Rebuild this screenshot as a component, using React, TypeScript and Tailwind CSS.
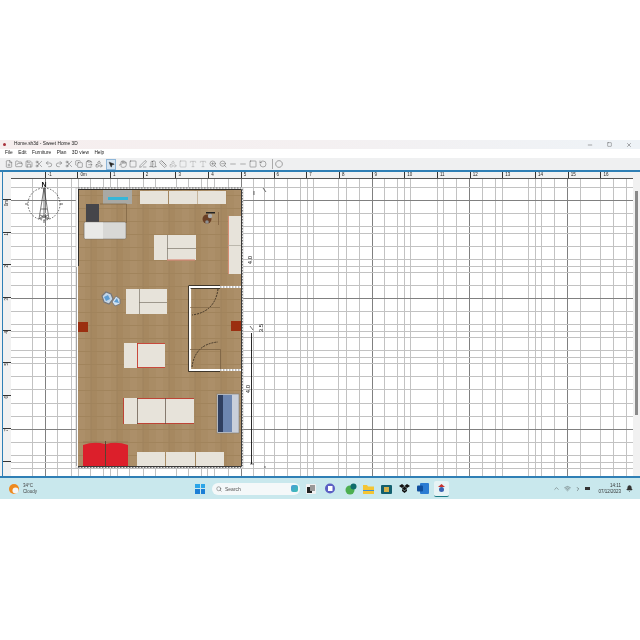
import {
  Bell, ChevronRight, ChevronUp, Circle, ClipboardPaste, Copy, DoorOpen, FilePlus, FolderOpen, Hand, Minus, MousePointer2,
  PenLine, Redo2, RotateCcw, Ruler, Save, Scissors, Search, Shapes, Square, Type, Undo2, Wifi, X, ZoomIn, ZoomOut,
} from "lucide-react"

const verticals = [10, 32, 45, 57, 71, 78, 90, 103, 110, 117, 129, 143, 155, 176, 188, 201, 207, 214, 228, 241, 253, 264, 274, 287, 300, 307, 313, 338, 346, 359, 372, 384, 397, 404, 410, 437, 443, 456, 469, 482, 495, 502, 528, 535, 541, 554, 567, 580, 600, 613, 626]
const darkV = [45, 241, 372, 469, 567]
const horizontals = [186, 199, 212, 225, 232, 245, 258, 265, 271, 284, 297, 310, 323, 330, 336, 349, 356, 362, 375, 388, 402, 415, 428, 441, 454, 461, 467]
const darkH = [199, 297, 428]

const rulerTop = ["", "-1", "0m", "1", "2", "3", "4", "5", "6", "7", "8", "9", "10", "11", "12", "13", "14", "15", "16"]
const rulerLeft = ["0m", "1", "2", "3", "4", "5", "6", "7"]
const toolsA = [FilePlus, FolderOpen, Save, Scissors, Undo2, Redo2, Scissors, Copy, ClipboardPaste, Shapes]
const toolsB = [Hand, Square, PenLine, DoorOpen, Ruler, Shapes, Square, Type, Type, ZoomIn, ZoomOut, Minus, Minus, Square, RotateCcw]

function Cabinet({ x, y, w, h }: { x: number; y: number; w: number; h: number }) {
  return <rect x={x} y={y} width={w} height={h} fill="#e7e3da" />
}

function Door({ d }: { d: string }) {
  return <path d={d} fill="none" stroke="#2a2118" strokeWidth="0.8" strokeDasharray="2 1" />
}

function Plan() {
  return (
    <svg width="622" height="298" viewBox="11 178 622 298" className="block">
      <defs>
        <pattern id="wood" width="26" height="26" x="78" y="188" patternUnits="userSpaceOnUse">
          <rect width="26" height="26" fill="#a98c65" />
          <rect width="7" height="26" fill="#ac8f69" />
          <rect x="13" width="6" height="26" fill="#a68860" />
          <path d="M0 6.5H26M0 19.5H26" stroke="#a1845c" strokeWidth="1" />
          <path d="M13 0V26" stroke="#9f835c" strokeWidth="1" />
        </pattern>
      </defs>

      {verticals.map((x) => (
        <line key={x} x1={x + 0.5} x2={x + 0.5} y1="178" y2="476" stroke={darkV.includes(x) ? "#808080" : "#c2c2c2"} />
      ))}
      {horizontals.map((y) => (
        <line key={y} x1="11" x2="633" y1={y + 0.5} y2={y + 0.5} stroke={darkH.includes(y) ? "#808080" : "#c2c2c2"} />
      ))}

      {/* compass */}
      <g fill="none" stroke="#222">
        <circle cx="44" cy="203" r="16" strokeWidth="0.7" strokeDasharray="1.5 1.5" />
        <path d="M44 187L39 218L44 214L49 218Z M41 208H47 M40 214L48 218 M48 214L40 218 M44 187V214" strokeWidth="0.6" />
        <path d="M25 203H28 M60 203H63 M44 219V222" strokeWidth="0.7" />
      </g>
      <text x="44" y="186" textAnchor="middle" fontSize="7" fontWeight="700" fill="#111">N</text>

      {/* floor and walls */}
      <rect x="76" y="187" width="167" height="280" fill="#fff" stroke="#b5b5b5" strokeWidth="0.6" />
      <rect x="78" y="188" width="163" height="277" fill="url(#wood)" />
      <path d="M78 187H241 M78 466.5H241" stroke="#555" strokeWidth="0.8" strokeDasharray="1.5 1.5" />
      <path d="M242.5 188V465" stroke="#666" strokeWidth="0.8" strokeDasharray="1.5 1.5" />
      <path d="M78 188.5H241.5V465.5H78 M78.5 188V265" fill="none" stroke="#222" strokeWidth="0.9" />
      <path d="M76.5 266V465" stroke="#777" strokeWidth="0.6" />

      {/* top left */}
      <rect x="103" y="189" width="29" height="14" fill="#a9a9a4" />
      <rect x="108" y="196" width="20" height="3" fill="#35b6d8" />
      <Cabinet x={140} y={190} w={28} h={13} />
      <Cabinet x={169} y={190} w={28.5} h={13} />
      <Cabinet x={198} y={190} w={28} h={13} />
      <path d="M100 203H126.5V222" fill="none" stroke="#7b6240" strokeWidth="0.7" />
      <rect x="86" y="203" width="13" height="18" fill="#45454a" />
      <rect x="84" y="221" width="42" height="17" rx="1.5" fill="#d8d8d6" stroke="#6e665a" strokeWidth="0.5" />
      <rect x="85" y="221.5" width="18" height="16" fill="#e9e9e7" />

      {/* chair */}
      <path d="M218.5 211V224" stroke="#7a5a3c" strokeWidth="0.7" />
      <rect x="206" y="211" width="9" height="1.5" fill="#222" />
      <circle cx="207" cy="218" r="4.5" fill="#6a3f25" />
      <circle cx="210" cy="215" r="2.2" fill="#aaa" />
      <circle cx="207" cy="221" r="1.8" fill="#8e8e8e" />

      {/* right cabinet */}
      <rect x="228" y="215" width="13" height="58" fill="#e7e3da" />
      <path d="M228.5 215V273" stroke="#d4846a" strokeWidth="0.9" />
      <path d="M228 244.5H241" stroke="#a9a599" strokeWidth="0.7" />

      {/* tables */}
      <Cabinet x={154} y={234} w={42} h={25} />
      <path d="M167.5 234V259 M167 247.5H196" stroke="#7d756a" strokeWidth="0.7" />
      <path d="M167 259H195" stroke="#d98a7a" strokeWidth="1.2" />
      <Cabinet x={126} y={288} w={41} h={25} />
      <path d="M139.5 288V313 M139 301.5H167" stroke="#7d756a" strokeWidth="0.7" />

      <Cabinet x={124} y={342} w={41} h={25} />
      <path d="M137 342.5H165 M137 366.5H165 M137.5 342V367" stroke="#c4382a" strokeWidth="0.9" />

      <Cabinet x={123} y={397} w={71} h={26} />
      <path d="M123.5 397V423 M137 397.5H194 M137 422.5H194" stroke="#b93224" strokeWidth="0.9" />
      <path d="M137.5 397V423 M165.5 397V423" stroke="#5c4c3f" strokeWidth="0.7" />

      {/* blue objects */}
      <path d="M102 295L106 291L111 293L113 298L109 303L104 301Z" fill="#c3d6e8" stroke="#77777a" strokeWidth="1.2" />
      <path d="M104 296L108 294L110 298L106 300Z" fill="#5e9dd2" />
      <path d="M112 301L116 295L120 298L120 303L115 305Z" fill="#d2e2f0" stroke="#77777a" strokeWidth="0.9" />
      <path d="M114 301L117 297L119 302Z" fill="#5e9dd2" />

      {/* columns */}
      <rect x="78" y="321" width="10" height="10" fill="#9b2f10" />
      <rect x="231" y="320" width="10" height="10" fill="#9b2f10" />

      {/* inner room */}
      <path d="M220 286H190V369H220" fill="none" stroke="#fff" strokeWidth="2.2" />
      <path d="M188.5 285V370.5H220 M188.5 284.5H220 M190.5 287.5H220" fill="none" stroke="#111" strokeWidth="0.7" />
      <path d="M220 286H241 M220 369H241" stroke="#fff" strokeWidth="2" />
      <path d="M220 286H241 M220 369H241" stroke="#555" strokeWidth="0.8" strokeDasharray="1.5 1.5" />
      <Door d="M218 288Q215 311 192 314" />
      <Door d="M192 366Q195 343 218 341" />
      <path d="M190 306.5H220" stroke="#7b6240" strokeWidth="0.6" />
      <path d="M190 348.5H220.5V368" fill="none" stroke="#6b5438" strokeWidth="0.6" />

      {/* blue item */}
      <rect x="217" y="393" width="22" height="39" fill="#c9cfda" stroke="#7c7c78" strokeWidth="0.6" />
      <rect x="218" y="394" width="5" height="37" fill="#2f3f60" />
      <rect x="223" y="394" width="9" height="37" fill="#6d86b0" />

      {/* sofas and bottom cabinets */}
      <path d="M83 465V444Q94 440 105 443V465Z M106 465V443Q117 440 128 444V465Z" fill="#dc1f2b" />
      <path d="M105.5 440V465" stroke="#33211b" strokeWidth="0.7" />
      <path d="M83 441H128" stroke="#8a6a48" strokeWidth="0.5" />
      <Cabinet x={137} y={451} w={28} h={14} />
      <Cabinet x={166} y={451} w={29} h={14} />
      <Cabinet x={196} y={451} w={28} h={14} />

      {/* dimensions */}
      <g stroke="#111" fill="none">
        <path d="M251.5 332V463" strokeWidth="0.9" />
        <path d="M254 190V194 M263 187L266 191 M250 325L253 329 M264 466H266 M250 463H254" strokeWidth="0.6" />
      </g>
      <g fontSize="6" fill="#111">
        <text x="252" y="259" textAnchor="middle" transform="rotate(-90 252 259)">4.0</text>
        <text x="263" y="327" textAnchor="middle" transform="rotate(-90 263 327)">3.5</text>
        <text x="250" y="388" textAnchor="middle" transform="rotate(-90 250 388)">4.0</text>
      </g>
    </svg>
  )
}

function AppIcons() {
  return (
    <div className="flex items-center">
      <svg width="10" height="10" viewBox="0 0 10 10" className="ml-[6px]">
        <rect width="10" height="10" rx="1" fill="#f2f2f2" />
        <rect x="1" y="3" width="5" height="6" fill="#222" />
        <rect x="4" y="1" width="5" height="6" fill="#999" />
      </svg>
      <svg width="11" height="11" viewBox="0 0 11 11" className="ml-[9px]">
        <circle cx="5" cy="5.5" r="5" fill="#5c5fc4" />
        <rect x="3" y="3" width="4.5" height="5" fill="#fff" />
      </svg>
      <svg width="12" height="12" viewBox="0 0 12 12" className="ml-[9px]">
        <circle cx="5" cy="7" r="4.5" fill="#4caf50" />
        <circle cx="8.5" cy="3.5" r="3" fill="#0f6c6c" />
      </svg>
      <svg width="11" height="10" viewBox="0 0 11 10" className="ml-[6px]">
        <path d="M0 1H4L5 2.5H11V10H0Z" fill="#f4c534" />
        <rect y="6" width="11" height="1" fill="#3a8ed6" />
      </svg>
      <svg width="11" height="11" viewBox="0 0 11 11" className="ml-[7px]">
        <rect y="2" width="11" height="9" rx="1" fill="#13606f" />
        <rect x="3" y="4" width="5" height="5" fill="#d2b04a" />
      </svg>
      <svg width="11" height="10" viewBox="0 0 11 10" className="ml-[7px]">
        <path d="M3 0L5.5 2L3 4L0 2Z M8 0L11 2L8 4L5.5 2Z M3 4.5L5.5 2.5L8 4.5L5.5 6.5Z M3 5L5.5 7L8 5L8 7L5.5 9L3 7Z" fill="#111" />
      </svg>
      <svg width="12" height="11" viewBox="0 0 12 11" className="ml-[7px]">
        <rect x="3" width="9" height="11" rx="1" fill="#2b7cd3" />
        <rect y="2.5" width="6" height="6" rx="1" fill="#104f9e" />
      </svg>
      <div className="ml-[5px] flex h-[16px] w-[15px] items-center justify-center rounded-[2px] border-b border-[#1c7c86] bg-[#e6f3f5]">
        <svg width="9" height="10" viewBox="0 0 9 10">
          <path d="M4.5 1L8 4H1Z" fill="#c8322e" />
          <circle cx="4.5" cy="6.5" r="2.5" fill="#3a62b0" />
        </svg>
      </div>
    </div>
  )
}

export default function App() {
  return (
    <div className="h-[640px] w-[640px] overflow-hidden bg-white pt-[140px] font-['Liberation_Sans',sans-serif] text-[#222]">
      <div className="flex flex-col blur-[0.3px]">
        {/* title bar */}
        <div className="flex h-[9px] items-center bg-gradient-to-r from-[#f6eeee] via-[#f4f0f1] to-[#eef3f7] pl-[3px]">
          <div className="h-[3px] w-[3px] rounded-full bg-[#a8323c]" />
          <span className="ml-[8px] text-[4.8px] leading-none">Home.sh3d - Sweet Home 3D</span>
          <div className="ml-auto flex items-center gap-[14px] pr-[8px]">
            <Minus size={6} strokeWidth={1.5} />
            <Square size={5} strokeWidth={1.5} />
            <X size={6} strokeWidth={1.5} />
          </div>
        </div>

        {/* menu bar */}
        <div className="flex h-[9px] items-center gap-[5.5px] bg-white pl-[5px] text-[4.8px] leading-none">
          <span>File</span>
          <span>Edit</span>
          <span>Furniture</span>
          <span>Plan</span>
          <span>3D view</span>
          <span>Help</span>
        </div>

        {/* toolbar */}
        <div className="flex h-[12px] items-center bg-[#eff0f1] pl-[4px]">
          {toolsA.map((Icon, i) => (
            <div key={i} className="flex w-[10px] justify-center">
              <Icon size={8} strokeWidth={1.3} className="text-[#4a4a4a]" />
            </div>
          ))}
          <div className="ml-[2px] mr-[2px] flex h-[11px] w-[10px] items-center justify-center border border-[#8fb6d8] bg-[#d4e4f2]">
            <MousePointer2 size={7} strokeWidth={1.6} className="fill-[#222] text-[#222]" />
          </div>
          {toolsB.map((Icon, i) => (
            <div key={i} className="flex w-[10px] justify-center">
              <Icon size={8} strokeWidth={1.3} className={i > 4 && i < 9 ? "text-[#9a9a9a]" : "text-[#4a4a4a]"} />
            </div>
          ))}
          <div className="ml-[4px] h-[10px] w-px bg-[#aaa]" />
          <Circle size={8} strokeWidth={1} strokeDasharray="2 1" className="ml-[2px] text-[#444]" />
        </div>

        {/* plan pane */}
        <div className="flex h-[308px] overflow-hidden border-t-2 border-b-2 border-[#2f7fb5] bg-[#f1f1f1]">
          <div className="ml-[2px] w-px bg-[#2f7fb5]" />
          <div className="flex flex-col">
            <div className="flex h-[7px] pl-[9px]">
              {rulerTop.map((label, i) => (
                <div key={i} className={`w-[32.7px] shrink-0 pl-[2px] text-[4.5px] leading-[6px] ${i === 0 ? "" : "border-l border-[#333]"}`}>
                  {label}
                </div>
              ))}
            </div>
            <div className="flex">
              <div className="flex h-[298px] w-[8px] flex-col overflow-hidden">
                <div className="h-[21px] shrink-0" />
                {rulerLeft.map((label) => (
                  <div key={label} className="h-[32.7px] shrink-0 border-t border-[#333] text-[4.5px] leading-[7px]">
                    <span className="block rotate-180 [writing-mode:vertical-rl]">{label}</span>
                  </div>
                ))}
                <div className="flex-1 border-t border-[#333]" />
              </div>
              <div className="h-[298px] overflow-hidden border-t border-[#555] bg-white">
                <Plan />
              </div>
            </div>
          </div>
          <div className="flex flex-1 justify-center pt-[19px]">
            <div className="h-[224px] w-[3px] bg-[#8a8a8a]" />
          </div>
        </div>

        {/* taskbar */}
        <div className="flex h-[21px] items-center bg-[#c9e8ed] text-[4.5px] leading-[6px]">
          <svg width="12" height="12" viewBox="0 0 12 12" className="ml-[8px]">
            <circle cx="6" cy="6" r="5" fill="#ee8a1f" />
            <circle cx="7.5" cy="7.5" r="3" fill="#f5f5f5" />
          </svg>
          <div className="ml-[3px] w-[20px] text-[#444]">
            <div>34°C</div>
            <div>Cloudy</div>
          </div>
          <div className="ml-[152px] grid h-[10px] w-[10px] grid-cols-2 gap-px">
            <div className="bg-[#2aa5e8]" />
            <div className="bg-[#2aa5e8]" />
            <div className="bg-[#1c7fd6]" />
            <div className="bg-[#1c7fd6]" />
          </div>
          <div className="ml-[7px] flex h-[12px] w-[88px] items-center rounded-full bg-[#f4f8f9] pl-[4px] pr-[2px]">
            <Search size={6} strokeWidth={1.6} className="text-[#333]" />
            <span className="ml-[3px] text-[5px] text-[#555]">Search</span>
            <div className="ml-auto h-[7px] w-[7px] rounded-[2px] bg-gradient-to-br from-[#4a9ad8] to-[#3bbfb1]" />
          </div>
          <AppIcons />
          <div className="ml-auto flex items-center gap-[4px] text-[#333]">
            <ChevronUp size={7} strokeWidth={1.4} />
            <Wifi size={7} strokeWidth={1.4} />
            <ChevronRight size={6} strokeWidth={2} />
            <div className="h-[3px] w-[5px] bg-[#333]" />
            <div className="ml-[4px] text-right">
              <div>14:11</div>
              <div>07/12/2023</div>
            </div>
            <Bell size={7} strokeWidth={1.8} className="ml-[1px] mr-[7px] fill-[#333]" />
          </div>
        </div>
      </div>
    </div>
  )
}
